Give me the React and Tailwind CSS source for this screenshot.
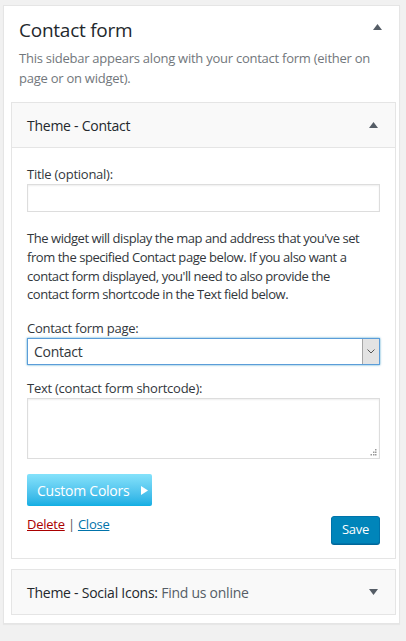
// Sidebar widget panel: "Contact form" area with an expanded contact widget
// and a collapsed social icons widget below it.

const FONT = '"Open Sans", "Noto Sans", sans-serif'

function ArrowUp() {
  return (
    <svg width="9" height="6" viewBox="0 0 9 6" aria-hidden="true">
      <path d="M4.5 0 L9 6 L0 6 Z" fill="#555d66" />
    </svg>
  )
}

function ArrowDown() {
  return (
    <svg width="9" height="6" viewBox="0 0 9 6" aria-hidden="true">
      <path d="M0 0 L9 0 L4.5 6 Z" fill="#555d66" />
    </svg>
  )
}

function WidgetHeader({ title, sub, open }) {
  return (
    <div className="h-[44px] flex items-center justify-between pl-[15px] pr-[17px] bg-[#f9f9f9]">
      <div className="text-[14px] text-[#23282d]">
        <span className="font-medium">{title}</span>
        {sub && <span className="text-[#555d66]"> {sub}</span>}
      </div>
      {open ? <ArrowUp /> : <ArrowDown />}
    </div>
  )
}

export default function App() {
  return (
    <div className="min-h-[641px] bg-[#f1f1f1] pt-[5px] pl-[3px] tracking-[-0.25px]" style={{ fontFamily: FONT }}>
      <div className="w-[397px] bg-white border border-[#e5e5e5] shadow-[0_1px_1px_rgba(0,0,0,0.04)] pl-[7px] pr-[3px] pb-[8px]">
        {/* sidebar name + description */}
        <div className="pl-[8px] pr-[14px] pt-[12px] mb-[14px]">
          <div className="flex items-start justify-between">
            <h2 className="text-[19px] leading-[24px] font-medium text-[#23282d]">Contact form</h2>
            <div className="mt-[6px]"><ArrowUp /></div>
          </div>
          <p className="mt-[6px] text-[13px] leading-[20px] text-[#72777c]">
            This sidebar appears along with your contact form (either on page or on widget).
          </p>
        </div>

        {/* expanded widget */}
        <div className="border border-[#e5e5e5]">
          <div className="border-b border-[#e5e5e5]">
            <WidgetHeader title="Theme - Contact" open />
          </div>
          <div className="px-[15px] pt-[16px] pb-[14px] text-[13px] text-[#32373c]">
            <label className="block leading-[20px]">Title (optional):</label>
            <div className="h-[28px] border border-[#ddd] shadow-[inset_0_1px_2px_rgba(0,0,0,0.07)] bg-white" />

            <p className="mt-[17px] leading-[18.75px] tracking-[-0.45px]">
              The widget will display the map and address that you've set<br />
              from the specified Contact page below. If you also want a<br />
              contact form displayed, you'll need to also provide the<br />
              contact form shortcode in the Text field below.
            </p>

            <label className="block mt-[14px] leading-[20px]">Contact form page:</label>
            <div className="h-[27px] border border-[#5b9dd9] shadow-[0_0_2px_rgba(30,140,190,0.8)] bg-white flex items-center justify-between">
              <span className="pl-[6px] text-[14px] text-[#32373c]">Contact</span>
              <div className="h-full w-[17px] bg-[#e3e3e3] border-l border-[#a6a6a6] flex items-center justify-center">
                <svg width="8" height="5" viewBox="0 0 8 5" aria-hidden="true">
                  <path d="M0.5 0.5 L4 4 L7.5 0.5" fill="none" stroke="#555" strokeWidth="1" />
                </svg>
              </div>
            </div>

            <label className="block mt-[14px] leading-[19px]">Text (contact form shortcode):</label>
            <div className="relative h-[61px] border border-[#ddd] shadow-[inset_0_1px_2px_rgba(0,0,0,0.07)] bg-white">
              <svg className="absolute right-[2px] bottom-[2px]" width="7" height="7" viewBox="0 0 7 7" aria-hidden="true">
                <g fill="#999">
                  <rect x="5" y="0" width="1.5" height="1.5" />
                  <rect x="3" y="2.5" width="1.5" height="1.5" />
                  <rect x="5" y="2.5" width="1.5" height="1.5" />
                  <rect x="0.5" y="5" width="1.5" height="1.5" />
                  <rect x="3" y="5" width="1.5" height="1.5" />
                  <rect x="5" y="5" width="1.5" height="1.5" />
                </g>
              </svg>
            </div>

            <div className="mt-[15px] w-[125px] h-[32px] rounded-[2px] bg-gradient-to-b from-[#84e2fb] to-[#0eaee3] flex items-center pl-[10px] gap-[12px] text-white text-[14px]">
              <span>Custom Colors</span>
              <svg width="7" height="9" viewBox="0 0 7 9" aria-hidden="true">
                <path d="M0 0 L7 4.5 L0 9 Z" fill="#fff" />
              </svg>
            </div>

            <div className="mt-[8px] flex items-start justify-between">
              <div className="leading-[20px] text-[13px]">
                <a className="text-[#a00] underline">Delete</a>
                <span className="text-[#555]"> | </span>
                <a className="text-[#0073aa] underline">Close</a>
              </div>
              <button className="mt-[2px] h-[28px] w-[49px] rounded-[3px] bg-[#0085ba] border border-[#0073aa] shadow-[0_1px_0_#006799] text-white text-[13px]">
                Save
              </button>
            </div>
          </div>
        </div>

        {/* collapsed widget */}
        <div className="mt-[10px] border border-[#e5e5e5]">
          <WidgetHeader title="Theme - Social Icons:" sub="Find us online" />
        </div>
      </div>
    </div>
  )
}
